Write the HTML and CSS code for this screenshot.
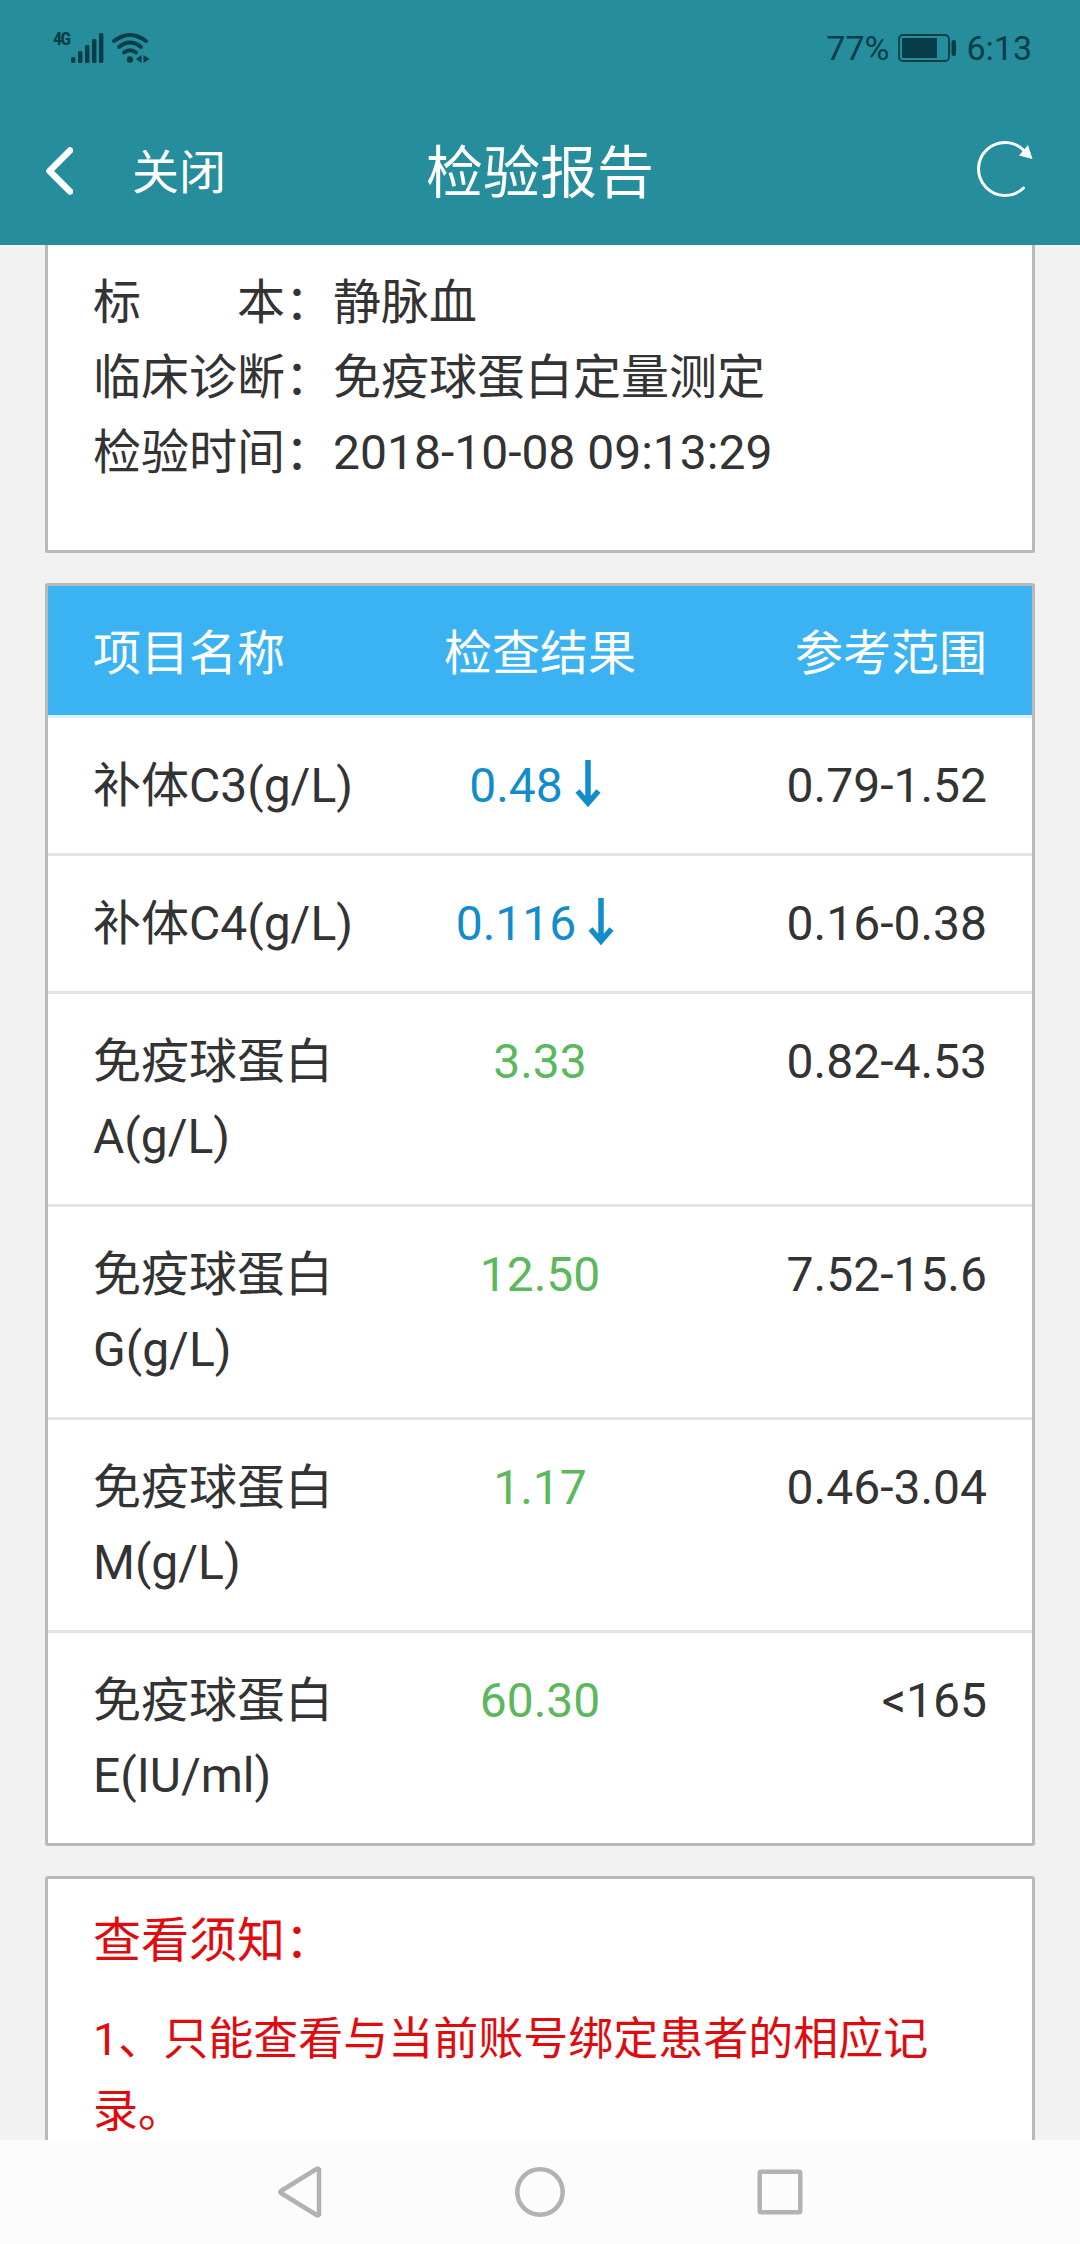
FILE: index.html
```html
<!DOCTYPE html>
<html lang="zh-CN">
<head>
  <meta charset="UTF-8">
  <title>检验报告</title>
  <link rel="stylesheet" href="styles.css">
</head>
<body>
  <div class="header">
    <div class="status-bar">
      <div class="status-left">
        <span class="network">4G</span>
        <svg class="signal" width="33" height="30" viewBox="0 0 33 30">
          <rect x="0" y="24" width="4.4" height="6" rx="2"/>
          <rect x="7" y="18" width="4.4" height="12" rx="1.5"/>
          <rect x="14" y="12" width="4.4" height="18" rx="1.5"/>
          <rect x="21" y="6" width="4.4" height="24" rx="1.5"/>
          <rect x="28" y="0" width="4.4" height="30" rx="1.5"/>
        </svg>
        <svg class="wifi" width="38" height="30" viewBox="0 0 38 30">
          <g fill="none" stroke-width="3.8" stroke-linecap="round">
            <path d="M2 8Q18 -4 34 8"/>
            <path d="M7 14Q18 5 29 14"/>
            <path d="M12 19.5Q18 15 24 19.5"/>
          </g>
          <circle cx="18" cy="26.5" r="3.2"/>
          <path d="M29.5 22v8l-5.500-4zM31.500 22v8l6-4z"/>
        </svg>
      </div>
      <div class="status-right">
        <span>77%</span>
        <svg class="battery" width="59" height="28" viewBox="0 0 59 28">
          <rect x="1" y="1" width="50" height="26" rx="4" fill="none" stroke-width="1.8"/>
          <rect x="4" y="4" width="35" height="20" rx="1"/>
          <rect x="53.500" y="6" width="4.500" height="16" rx="2"/>
        </svg>
        <span>6:13</span>
      </div>
    </div>
    <div class="nav-bar">
      <div class="nav-left">
        <svg class="back" width="28" height="48" viewBox="0 0 28 48">
          <path d="M25 3.500L4.500 24L25 44.500"/>
        </svg>
        <span class="close">关闭</span>
      </div>
      <h1>检验报告</h1>
      <svg class="refresh" width="58" height="60" viewBox="0 0 58 60">
        <path d="M47.500 12A26.500 26.500 0 1 0 46.500 49" fill="none" stroke="#fff" stroke-width="3" stroke-linecap="round"/>
        <path d="M51 6L55.500 20L42 16.500Z" fill="#fff"/>
      </svg>
    </div>
  </div>

  <div class="content">
    <div class="card info">
      <p>标　　本：静脉血</p>
      <p>临床诊断：免疫球蛋白定量测定</p>
      <p>检验时间：2018-10-08 09:13:29</p>
    </div>

    <div class="card">
      <table>
        <thead>
          <tr>
            <th>项目名称</th>
            <th>检查结果</th>
            <th>参考范围</th>
          </tr>
        </thead>
        <tbody>
          <tr>
            <td>补体C3(g/L)</td>
            <td class="low">0.48<svg class="arrow" width="48" height="48" viewBox="0 0 48 48"><path d="M25 0V43M14.500 31L25 43L35.500 31"/></svg></td>
            <td>0.79-1.52</td>
          </tr>
          <tr>
            <td>补体C4(g/L)</td>
            <td class="low">0.116<svg class="arrow" width="48" height="48" viewBox="0 0 48 48"><path d="M25 0V43M14.500 31L25 43L35.500 31"/></svg></td>
            <td>0.16-0.38</td>
          </tr>
          <tr>
            <td>免疫球蛋白<br>A(g/L)</td>
            <td class="normal">3.33</td>
            <td>0.82-4.53</td>
          </tr>
          <tr>
            <td>免疫球蛋白<br>G(g/L)</td>
            <td class="normal">12.50</td>
            <td>7.52-15.6</td>
          </tr>
          <tr>
            <td>免疫球蛋白<br>M(g/L)</td>
            <td class="normal">1.17</td>
            <td>0.46-3.04</td>
          </tr>
          <tr>
            <td>免疫球蛋白<br>E(IU/ml)</td>
            <td class="normal">60.30</td>
            <td>&lt;165</td>
          </tr>
        </tbody>
      </table>
    </div>

    <div class="card notice">
      <h2>查看须知：</h2>
      <p>1、只能查看与当前账号绑定患者的相应记录。</p>
    </div>
  </div>

  <div class="system-nav">
    <svg width="52" height="52" viewBox="0 0 52 52"><path d="M45 3.500V48.500Q44 50 42.500 49L7 27Q5.500 26 7 25L42.500 3Q44 2 45 3.500Z"/></svg>
    <svg width="52" height="52" viewBox="0 0 52 52"><circle cx="26" cy="26" r="22.700"/></svg>
    <svg width="52" height="52" viewBox="0 0 52 52"><rect x="5.700" y="5.700" width="40.600" height="40.600" rx="1.500"/></svg>
  </div>
</body>
</html>
```

FILE: styles.css
```css
* {
  box-sizing: border-box;
}

body {
  margin: 0;
  height: 2244px;
  display: flex;
  flex-direction: column;
  overflow: hidden;
  background: #f2f2f2;
  color: #333;
  font-family: Roboto, "Noto Sans CJK SC", sans-serif;
  font-size: 48px;
  line-height: 75px;
}

h1, h2, p {
  margin: 0;
  font-weight: normal;
}

svg {
  display: block;
  flex: none;
}

/* header */
.header {
  flex: none;
  height: 245px;
  background: #258d9b;
  color: #fff;
}

.status-bar {
  display: flex;
  justify-content: space-between;
  height: 96px;
  padding: 0 48px 0 53px;
  color: #073d49;
  fill: #073d49;
  stroke: none;
}

.status-left,
.status-right {
  display: flex;
  align-items: center;
}

.network {
  align-self: flex-start;
  width: 18px;
  margin-top: 29px;
  font-family: "Roboto Condensed", Roboto, sans-serif;
  font-size: 18px;
  font-weight: bold;
  line-height: 20px;
  letter-spacing: -1.5px;
}

.wifi {
  margin-left: 8px;
}

.wifi g,
.battery rect:first-child {
  stroke: #073d49;
}

.status-right {
  font-size: 34px;
}

.battery {
  margin: 0 9px;
}

.nav-bar {
  display: grid;
  grid-template-columns: 1fr auto 1fr;
  align-items: center;
  height: 149px;
  padding: 0 45px;
}

.nav-left {
  display: flex;
  align-items: center;
}

.back {
  fill: none;
  stroke: #fff;
  stroke-width: 6.5;
  stroke-linecap: round;
  stroke-linejoin: round;
}

.close {
  margin-left: 59px;
  padding-top: 4px;
  font-size: 47px;
}

.nav-bar h1 {
  padding-top: 6px;
  font-size: 57px;
}

.refresh {
  justify-self: end;
  margin-bottom: 3px;
}

/* report */
.content {
  flex: 1;
  min-height: 0;
  overflow: hidden;
  padding: 0 45px;
}

.card {
  margin-bottom: 30px;
  border: 3px solid #b9b9b9;
  border-radius: 3px;
  background: #fff;
}

.info {
  padding: 20px 45px 60px;
  border-top: 0;
  border-radius: 0 0 3px 3px;
}

table {
  width: 100%;
  table-layout: fixed;
  border-spacing: 0;
}

th, td {
  padding: 30px 0;
  border-bottom: 3px solid #e3e3e3;
  font-weight: normal;
  text-align: center;
  vertical-align: top;
}

th {
  padding: 30px 0 24px;
  border-bottom-color: #dcf1fd;
  background: #3bb3f2;
  background-clip: padding-box;
  color: #fff;
}

th:first-child,
td:first-child {
  padding-left: 45px;
  text-align: left;
}

th:last-child,
td:last-child {
  padding-right: 45px;
  text-align: right;
}

tbody tr:last-child td {
  border-bottom: 0;
}

.low {
  color: #128ccb;
}

.normal {
  color: #5cb85c;
}

.arrow {
  display: inline-block;
  vertical-align: -6px;
  fill: none;
  stroke: #128ccb;
  stroke-width: 5.5;
}

/* notice */
.notice {
  padding: 24px 45px;
  color: #e00b0f;
}

.notice h2 {
  font-size: 48px;
}

.notice p {
  margin-top: 26px;
  font-size: 45px;
  line-height: 72px;
}

/* system buttons */
.system-nav {
  flex: none;
  display: flex;
  justify-content: center;
  align-items: center;
  gap: 188px;
  height: 104px;
  background: #fcfcfc;
  fill: none;
  stroke: #b2b2b2;
  stroke-width: 4.5;
}
```
